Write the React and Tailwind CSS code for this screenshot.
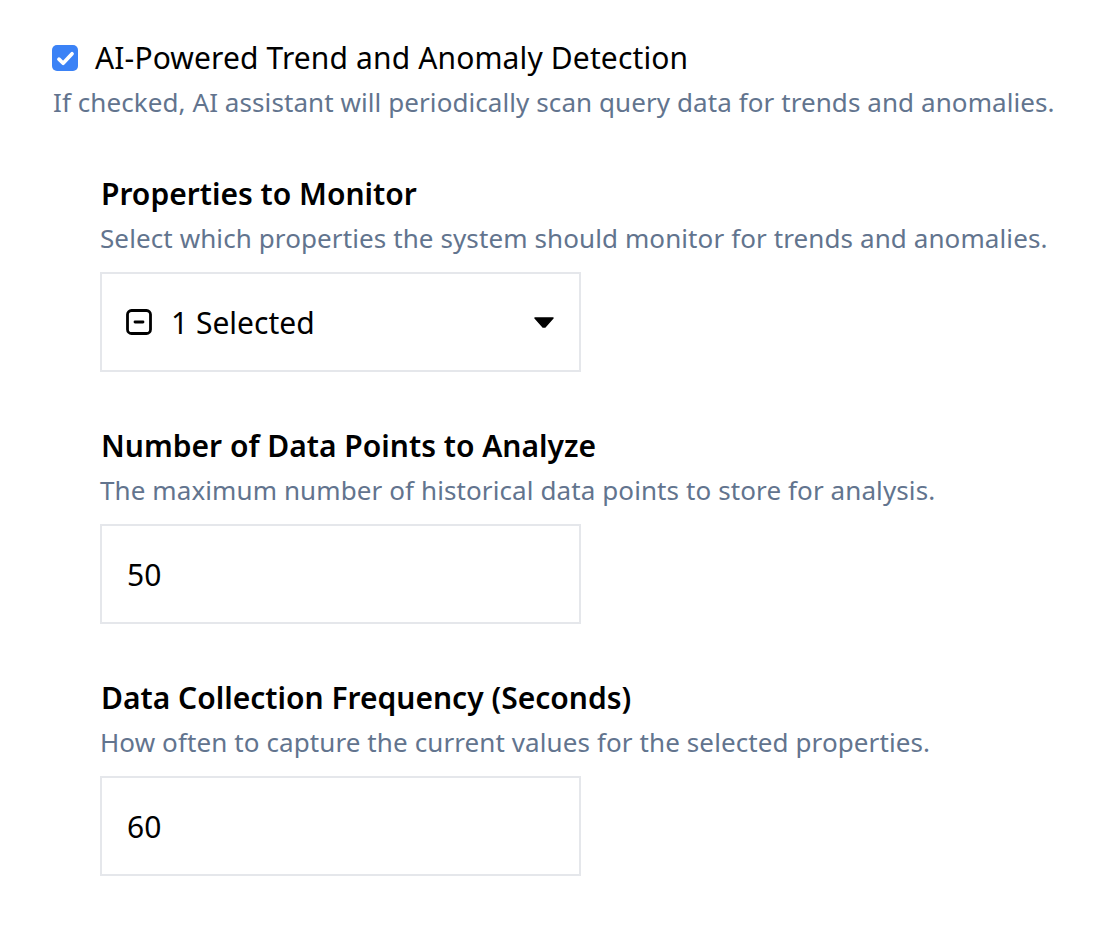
import React, { useState } from "react";

const font = { fontFamily: '"Noto Sans", "Open Sans", sans-serif' };

const Field = ({ title, hint, children }) => (
  <div className="flex flex-col">
    <h3 className="text-[30px] leading-[44px] font-semibold text-black pl-[1px]">{title}</h3>
    <p className="text-[26px] leading-[44px] tracking-[0.1px] text-slate-500">{hint}</p>
    <div className="mt-3">{children}</div>
  </div>
);

const NumberBox = ({ value, onChange }) => (
  <input
    type="text"
    value={value}
    onChange={(e) => onChange(e.target.value)}
    className="w-[481px] h-[100px] border-2 border-gray-200 bg-white px-[25px] text-[30px] text-black outline-none"
    style={font}
  />
);

export default function App() {
  const [enabled, setEnabled] = useState(true);
  const [points, setPoints] = useState("50");
  const [freq, setFreq] = useState("60");

  return (
    <div className="min-h-[930px] bg-white pl-[52px] pt-[36px]" style={font}>
      <label className="flex items-center gap-[17px] cursor-pointer">
        <button
          type="button"
          onClick={() => setEnabled(!enabled)}
          className={`w-[26px] h-[26px] rounded-[5px] flex items-center justify-center ${
            enabled ? "bg-[#3b82f6]" : "border-2 border-gray-300 bg-white"
          }`}
        >
          {enabled && (
            <svg viewBox="0 0 16 16" className="w-[21px] h-[21px]" fill="none">
              <path
                d="M3 8.5l3.2 3.1 6.8-7.2"
                stroke="white"
                strokeWidth="2.8"
                strokeLinecap="round"
                strokeLinejoin="round"
              />
            </svg>
          )}
        </button>
        <span className="text-[30px] leading-[44px] tracking-[0.13px] text-black">
          AI-Powered Trend and Anomaly Detection
        </span>
      </label>
      <p className="text-[26px] leading-[44px] tracking-[0.08px] text-slate-500 pl-[1px]">
        If checked, AI assistant will periodically scan query data for trends and anomalies.
      </p>

      <div className="pl-[48px] mt-[48px] flex flex-col gap-[52px]">
        <Field
          title="Properties to Monitor"
          hint="Select which properties the system should monitor for trends and anomalies."
        >
          <div className="w-[481px] h-[100px] border-2 border-gray-200 bg-white flex items-center pl-[24px] pr-[25px]">
            <svg viewBox="0 0 26 26" className="w-[26px] h-[26px]" fill="none">
              <rect x="1.5" y="1.5" width="23" height="23" rx="4" stroke="black" strokeWidth="2.8" />
              <path d="M9 13h8" stroke="black" strokeWidth="2.8" strokeLinecap="round" />
            </svg>
            <span className="ml-[19px] text-[30px] text-black flex-1">1 Selected</span>
            <svg viewBox="0 0 20 11" className="w-[20px] h-[11px]">
              <path d="M1 1h18l-8 9h-2z" fill="black" stroke="black" strokeLinejoin="round" strokeWidth="1.5" />
            </svg>
          </div>
        </Field>

        <Field
          title="Number of Data Points to Analyze"
          hint="The maximum number of historical data points to store for analysis."
        >
          <NumberBox value={points} onChange={setPoints} />
        </Field>

        <Field
          title="Data Collection Frequency (Seconds)"
          hint="How often to capture the current values for the selected properties."
        >
          <NumberBox value={freq} onChange={setFreq} />
        </Field>
      </div>
    </div>
  );
}
